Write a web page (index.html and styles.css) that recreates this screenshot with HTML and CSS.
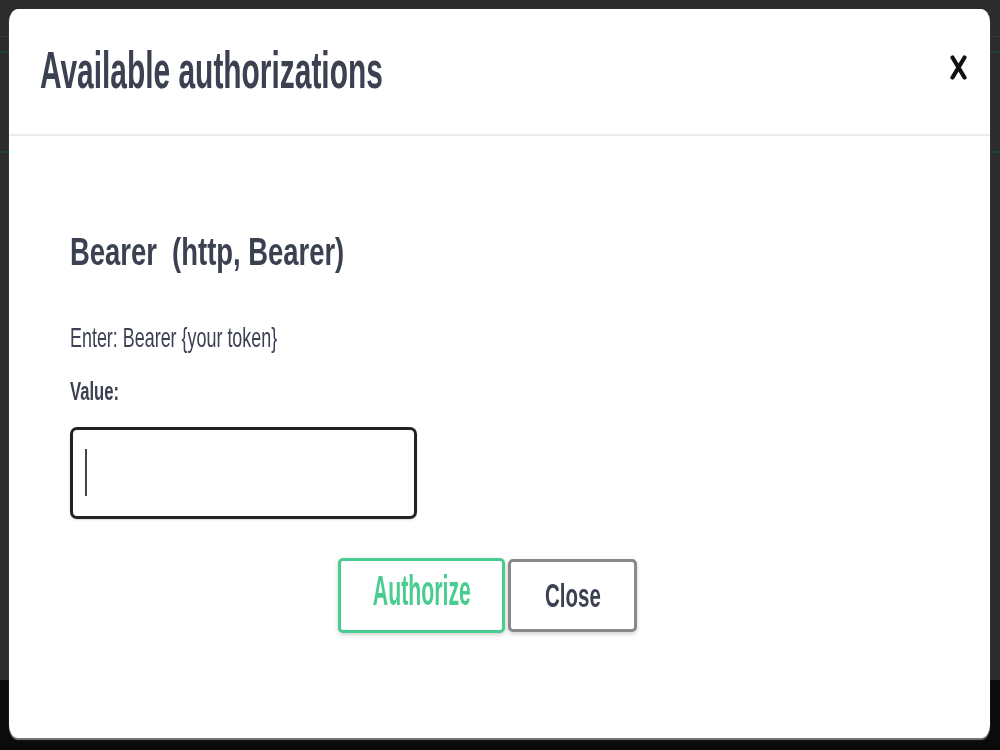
FILE: index.html
```html
<html lang="en">
<head>
  <meta charset="UTF-8" />
  <title>Available authorizations</title>
  <link rel="stylesheet" href="styles.css">
</head>
<body>
  <div class="page">
    <div class="page-top">
      <div class="line line-gray"></div>
      <div class="line line-green first"></div>
      <div class="line line-green second"></div>
    </div>
  </div>

  <div class="overlay">
    <div class="modal">
      <div class="modal-header">
        <h3 class="modal-title"><span class="sq">Available authorizations</span></h3>
        <button class="close-x" aria-label="Close">
          <svg width="17" height="25" viewBox="0 0 17 25">
            <path d="M2.5 2.5 L14.5 22.5 M14.5 2.5 L2.5 22.5" fill="none" stroke="#111" stroke-width="4.2" stroke-linecap="round"/>
          </svg>
        </button>
      </div>

      <div class="modal-body">
        <h4 class="scheme"><span class="sq">Bearer&nbsp; (http, Bearer)</span></h4>
        <p class="desc"><span class="sq">Enter: Bearer {your token}</span></p>
        <label class="value-label"><span class="sq">Value:</span></label>
        <div class="field">
          <input type="text" />
          <span class="caret"></span>
        </div>
        <div class="btn-row">
          <button class="btn authorize"><span class="sq">Authorize</span></button>
          <button class="btn close"><span class="sq">Close</span></button>
        </div>
      </div>
    </div>
  </div>
</body>
</html>
```

FILE: styles.css
```css
body { margin:0; background:#0b0b0b; font-family:"Liberation Sans", Arial, sans-serif; color:#3b4151; }

/* dimmed page behind the dialog */
.page-top { height:680px; background:#2c2c2c; padding-top:36px; box-sizing:border-box; }
.line { height:1px; }
.line-gray { background:#3a3a3a; }
.line-green { background:#1f4230; height:2px; }
.line-green.first { margin-top:14px; }
.line-green.second { margin-top:98px; }

.overlay { position:fixed; top:0; left:0; right:0; bottom:0; padding:9px 10px 0 9px; }
.modal {
  height:729px; background:#fff; border-radius:9px / 13px;
  box-shadow:0 2px 1px rgba(170,170,170,0.7);
  display:flex; flex-direction:column;
}

/* text is drawn narrow, like the squeezed original */
.sq { display:inline-block; transform-origin:left center; white-space:nowrap; }

.modal-header {
  height:125px; border-bottom:2px solid #ececec;
  display:flex; align-items:center; justify-content:space-between;
  padding:0 23px 0 31px;
}
.modal-title { margin:0 0 3px; font-size:52px; font-weight:bold; line-height:1; }
.modal-title .sq { transform:scaleX(0.575); }
.close-x { border:none; background:none; padding:0; margin-bottom:8px; display:flex; cursor:pointer; }

.modal-body { padding-left:61px; }
.scheme { margin:96px 0 0; font-size:39px; font-weight:bold; line-height:1; }
.scheme .sq { transform:scaleX(0.703); }
.desc { margin:53px 0 0; font-size:28px; line-height:1; }
.desc .sq { transform:scaleX(0.64); }
.value-label { display:block; margin-top:26px; font-size:26px; font-weight:bold; line-height:1; }
.value-label .sq { transform:scaleX(0.64); }

.field { position:relative; margin-top:23px; width:347px; height:92px; }
.field input {
  width:100%; height:100%; box-sizing:border-box;
  border:3px solid #222; border-radius:7px; outline:none; background:#fff;
  box-shadow:0 1px 2px rgba(0,0,0,0.15);
}
.caret { position:absolute; left:15px; top:22px; width:2px; height:47px; background:#444; }

.btn-row { margin-top:39px; padding-right:85px; display:flex; justify-content:center; align-items:center; gap:3px; }
.btn {
  background:#fff; border-radius:5px; border:3px solid; box-sizing:border-box;
  font-family:"Liberation Sans", Arial, sans-serif; font-weight:bold; line-height:1;
  display:flex; justify-content:center; align-items:center; padding:0;
  box-shadow:0 2px 4px rgba(0,0,0,0.18); cursor:pointer;
}
.btn .sq { transform-origin:center center; }
.authorize { width:167px; height:75px; border-color:#49cc90; color:#49cc90; font-size:42px; padding-bottom:10px; }
.authorize .sq { transform:scaleX(0.506); }
.close { width:129px; height:73px; border-color:#888; color:#3b4151; font-size:33px; }
.close .sq { transform:scaleX(0.62); }
```
